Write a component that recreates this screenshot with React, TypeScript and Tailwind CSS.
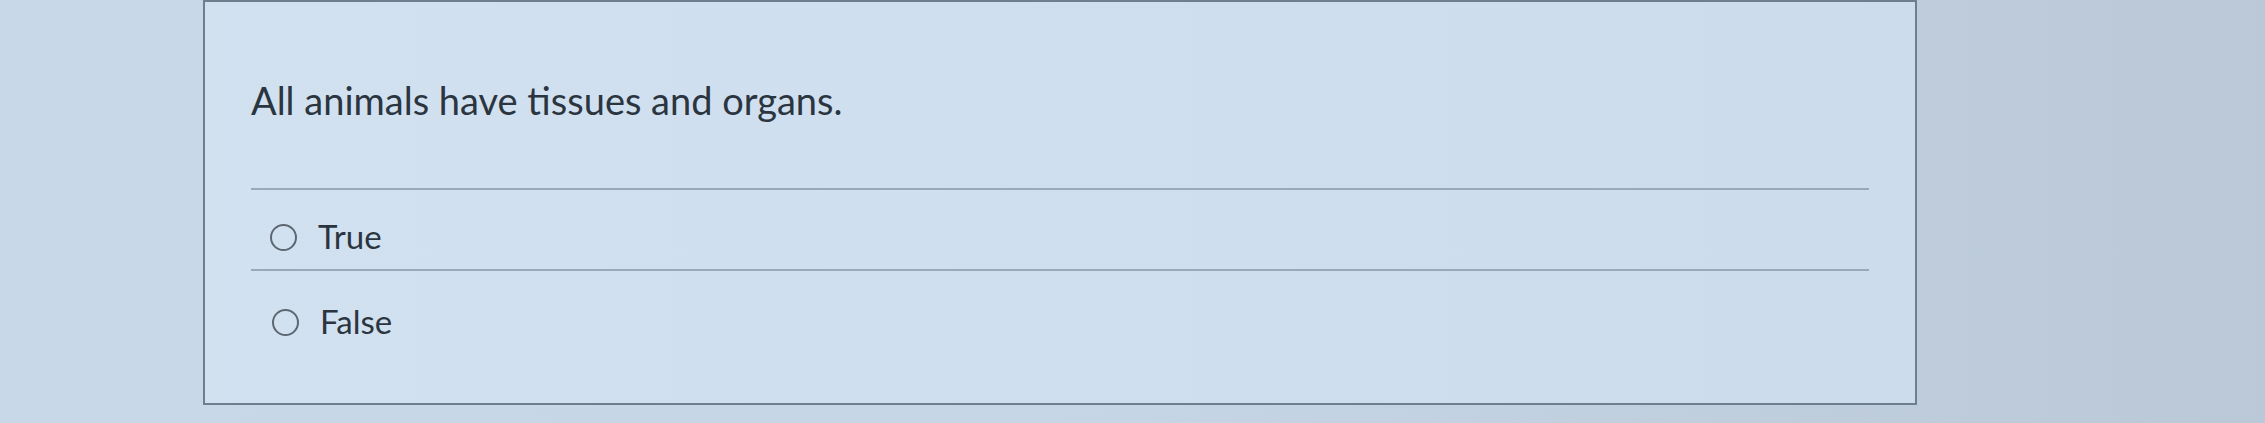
import React from "react";

const options = ["True", "False"];

function Radio() {
  return (
    <span className="block w-[27px] h-[27px] rounded-full border-2 border-[#5d6772] shrink-0" />
  );
}

export default function App() {
  return (
    <div
      className="w-[2265px] h-[423px] overflow-hidden bg-gradient-to-r from-[#c9d8e8] via-[#c6d5e5] to-[#bac8d7]"
      style={{ fontFamily: "Lato, 'Open Sans', 'Liberation Sans', sans-serif" }}
    >
      <div className="ml-[203px] w-[1714px] h-[405px] border-2 border-[#6f7d8c] bg-gradient-to-r from-[#d1e1f0] to-[#cddced] px-[46px] pt-[70px]">
        <p className="text-[38px] leading-[56px] text-[#2b3540]">
          All animals have tissues and organs.
        </p>
        <div className="mt-[60px] border-t-2 border-[#9aa8b7]">
          {options.map((o, i) => (
            <label
              key={o}
              className={
                i === 0
                  ? "flex items-center gap-[21px] h-[81px] pt-[15px] pl-[19px] border-b-2 border-[#9aa8b7]"
                  : "flex items-center gap-[21px] h-[104px] pb-[2px] pl-[21px]"
              }
            >
              <Radio />
              <span className="text-[33px] text-[#2b3540]">{o}</span>
            </label>
          ))}
        </div>
      </div>
    </div>
  );
}
